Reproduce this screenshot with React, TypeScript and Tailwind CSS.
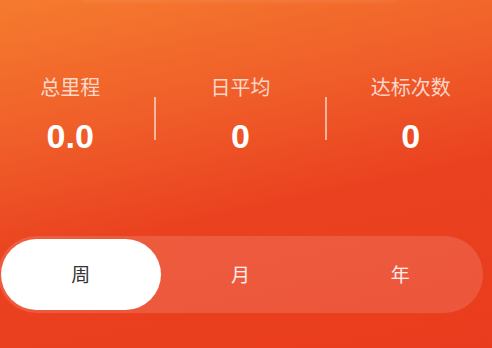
const stats = [
  { label: '总里程', value: '0.0' },
  { label: '日平均', value: '0' },
  { label: '达标次数', value: '0' },
];

const tabs = ['周', '月', '年'];

function Stat({ label, value }: { label: string; value: string }) {
  return (
    <div className="flex flex-1 flex-col items-center">
      <span className="text-[20px] leading-[24px] text-white/75">{label}</span>
      <span className="mt-[17px] font-['Liberation_Sans',sans-serif] text-[34px] font-bold leading-[40px] text-white">
        {value}
      </span>
    </div>
  );
}

export default function App() {
  return (
    <div className="relative h-[348px] w-[492px] overflow-hidden bg-[linear-gradient(168deg,#f57b2e_0%,#f0602a_30%,#ea4220_58%,#e93c1e_100%)] font-['Noto_Sans_CJK_SC','Noto_Sans',sans-serif]">
      <div className="absolute left-[60px] top-[-30px] h-[33px] w-[360px] rounded-b-[40px] bg-white/[0.06] blur-[1px]" />

      <div className="flex flex-col pt-[75px]">
        <div className="-ml-[14px] flex w-[509px] items-center">
          <Stat {...stats[0]} />
          <div className="mt-[6px] h-[43px] w-[2px] bg-white/55" />
          <Stat {...stats[1]} />
          <div className="mt-[6px] h-[43px] w-[2px] bg-white/55" />
          <Stat {...stats[2]} />
        </div>

        <div className="-ml-[2px] mt-[80px] flex h-[77px] w-[485px] rounded-full bg-white/[0.13] p-[3px]">
          {tabs.map((t, i) => (
            <div
              key={t}
              className={
                i === 0
                  ? 'flex flex-1 items-center justify-center rounded-full bg-white text-[19px] text-[#333]'
                  : 'flex flex-1 items-center justify-center text-[19px] text-white/90'
              }
            >
              {t}
            </div>
          ))}
        </div>
      </div>
    </div>
  );
}
